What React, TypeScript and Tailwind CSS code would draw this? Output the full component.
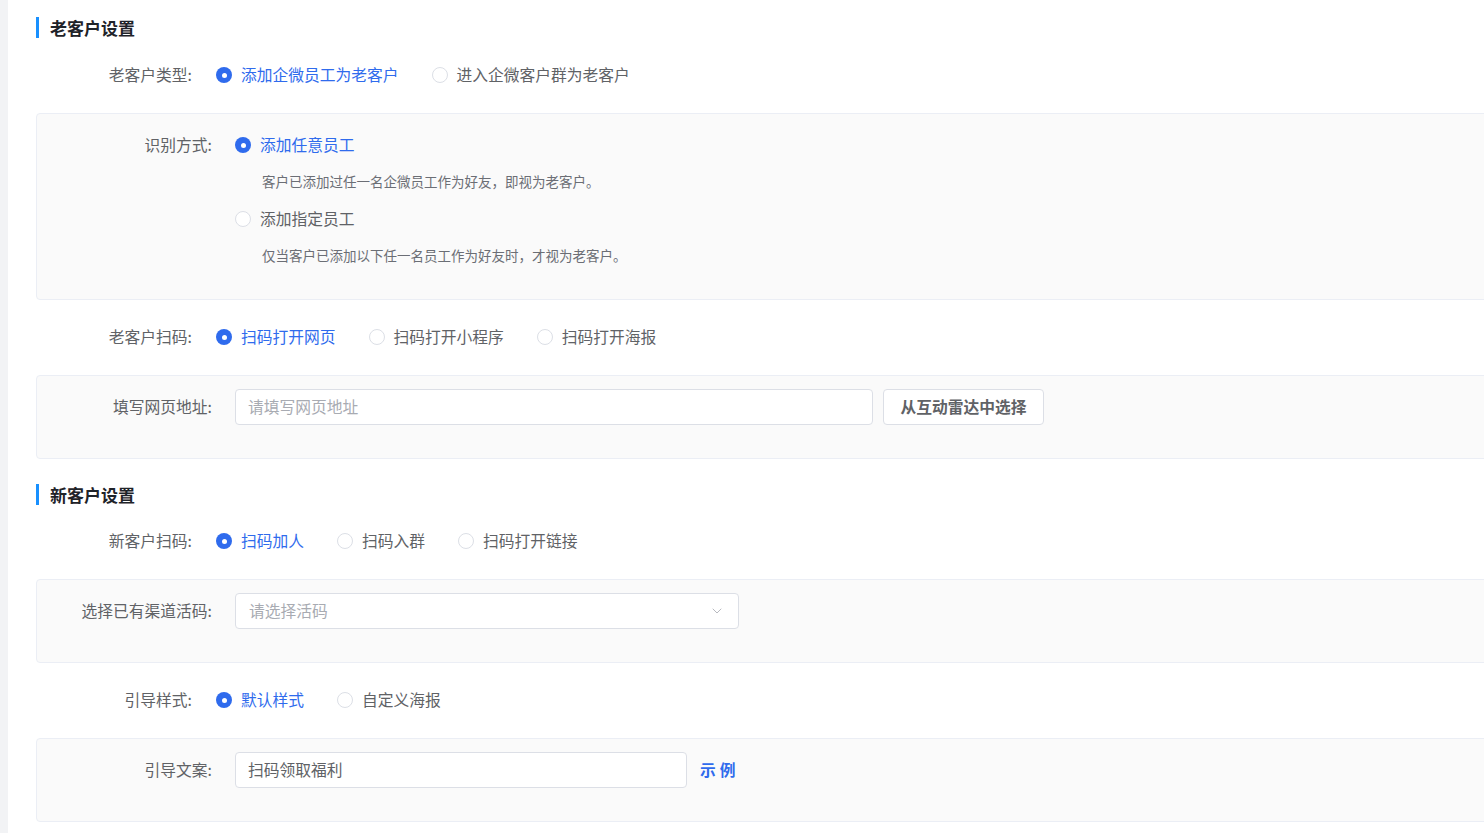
import { ChevronDown } from 'lucide-react';

const FONT = { fontFamily: '"Microsoft YaHei", "Noto Sans CJK SC", "Noto Sans", sans-serif' };

interface RadioOption {
  label: string;
  checked?: boolean;
}

function RadioDot({ checked }: { checked?: boolean }) {
  return checked ? (
    <span className="w-[16px] h-[16px] rounded-full bg-[#2f6bed] flex items-center justify-center shrink-0">
      <span className="w-[5px] h-[5px] rounded-full bg-white" />
    </span>
  ) : (
    <span className="w-[16px] h-[16px] rounded-full border border-[#dcdfe6] bg-white shrink-0" />
  );
}

function Radio({ label, checked }: RadioOption) {
  return (
    <label className="flex items-center mr-[33px] cursor-pointer">
      <RadioDot checked={checked} />
      <span className={`ml-[9px] text-[15.75px] ${checked ? 'text-[#2f6bed]' : 'text-[#606266]'}`}>{label}</span>
    </label>
  );
}

function SectionTitle({ title, className = '' }: { title: string; className?: string }) {
  return (
    <div className={`h-[21px] border-l-[3px] border-[#1890ff] pl-[11px] flex items-center ${className}`}>
      <span className="text-[17px] font-bold text-[#1f2329]">{title}</span>
    </div>
  );
}

function RadioRow({ label, options, className = '' }: { label: string; options: RadioOption[]; className?: string }) {
  return (
    <div className={`h-[36px] flex items-center ${className}`}>
      <div className="w-[157px] text-right text-[15.75px] text-[#606266] pr-[1px]">{label}:</div>
      <div className="flex items-center ml-[23px]">
        {options.map(o => (
          <Radio key={o.label} {...o} />
        ))}
      </div>
    </div>
  );
}

function Panel({ children, className = '' }: { children: React.ReactNode; className?: string }) {
  return (
    <div className={`w-[1480px] bg-[#fafafa] border border-[#ebeef5] rounded-[4px] pt-[13px] pb-[33px] ${className}`}>
      {children}
    </div>
  );
}

function PanelLabel({ text }: { text: string }) {
  return (
    <div className="w-[175px] h-[36px] flex items-center justify-end text-[15.75px] text-[#606266] shrink-0">
      {text}:
    </div>
  );
}

export default function App() {
  return (
    <div className="w-screen h-screen overflow-hidden flex bg-white" style={FONT}>
      <div className="w-[8px] bg-[#f2f3f5] shrink-0" />
      <div className="flex-1 pl-[28px] pt-[17px]">
        <SectionTitle title="老客户设置" />

        <RadioRow
          className="mt-[19px]"
          label="老客户类型"
          options={[{ label: '添加企微员工为老客户', checked: true }, { label: '进入企微客户群为老客户' }]}
        />

        <Panel className="mt-[20px]">
          <div className="flex">
            <PanelLabel text="识别方式" />
            <div className="ml-[23px] flex flex-col">
              <div className="h-[36px] flex items-center">
                <Radio label="添加任意员工" checked />
              </div>
              <div className="mt-[8px] leading-[20px] pl-[27px] text-[13.5px] text-[#6b6e75]">
                客户已添加过任一名企微员工作为好友，即视为老客户。
              </div>
              <div className="mt-[10px] h-[36px] flex items-center">
                <Radio label="添加指定员工" />
              </div>
              <div className="mt-[8px] mb-[1px] leading-[20px] pl-[27px] text-[13.5px] text-[#6b6e75]">
                仅当客户已添加以下任一名员工作为好友时，才视为老客户。
              </div>
            </div>
          </div>
        </Panel>

        <RadioRow
          className="mt-[19px]"
          label="老客户扫码"
          options={[{ label: '扫码打开网页', checked: true }, { label: '扫码打开小程序' }, { label: '扫码打开海报' }]}
        />

        <Panel className="mt-[20px]">
          <div className="flex items-center">
            <PanelLabel text="填写网页地址" />
            <div className="ml-[23px] w-[638px] h-[36px] bg-white border border-[#dcdfe6] rounded-[4px] flex items-center px-[12px] text-[15.75px] text-[#a8abb2]">
              请填写网页地址
            </div>
            <button className="ml-[10px] w-[161px] h-[36px] bg-white border border-[#dcdfe6] rounded-[4px] text-[15.75px] font-bold text-[#606266]">
              从互动雷达中选择
            </button>
          </div>
        </Panel>

        <SectionTitle title="新客户设置" className="mt-[25px]" />

        <RadioRow
          className="mt-[18px]"
          label="新客户扫码"
          options={[{ label: '扫码加人', checked: true }, { label: '扫码入群' }, { label: '扫码打开链接' }]}
        />

        <Panel className="mt-[20px]">
          <div className="flex items-center">
            <PanelLabel text="选择已有渠道活码" />
            <div className="ml-[23px] w-[504px] h-[36px] bg-white border border-[#dcdfe6] rounded-[4px] flex items-center justify-between pl-[13px] pr-[13px] text-[15.75px] text-[#a8abb2]">
              <span>请选择活码</span>
              <ChevronDown className="w-[16px] h-[16px] text-[#a8abb2]" strokeWidth={1.25} />
            </div>
          </div>
        </Panel>

        <RadioRow
          className="mt-[19px]"
          label="引导样式"
          options={[{ label: '默认样式', checked: true }, { label: '自定义海报' }]}
        />

        <Panel className="mt-[20px]">
          <div className="flex items-center">
            <PanelLabel text="引导文案" />
            <div className="ml-[23px] w-[452px] h-[36px] bg-white border border-[#dcdfe6] rounded-[4px] flex items-center px-[12px] text-[15.75px] text-[#606266]">
              扫码领取福利
            </div>
            <span className="ml-[13px] text-[15.75px] font-bold text-[#2f6bed] tracking-[4px]">示例</span>
          </div>
        </Panel>
      </div>
    </div>
  );
}
